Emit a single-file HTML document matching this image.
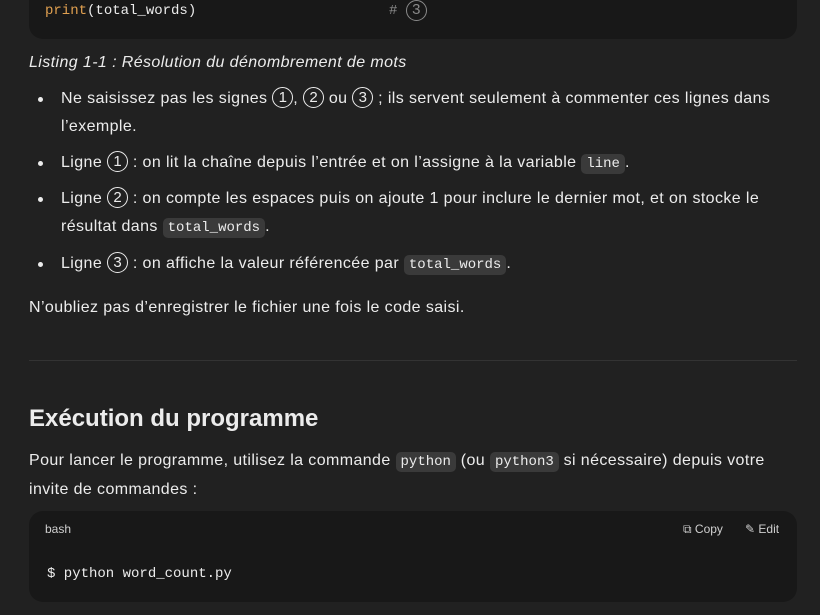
<!DOCTYPE html>
<html><head><meta charset="utf-8"><style>
*{margin:0;padding:0;box-sizing:border-box}
body{width:820px;height:615px;overflow:hidden;background:#212121;color:#ececec;font-family:"Liberation Sans","DejaVu Sans",sans-serif;font-size:16px;position:relative;letter-spacing:0.4px}
.abs{position:absolute}
.code{background:#181818;border-radius:14px;left:29px;width:768px}
.mono{font-family:"Liberation Mono","DejaVu Sans Mono",monospace;letter-spacing:0}
.ic{background:#3a3a3a;border-radius:5px;padding:2px 5px;font-family:"Liberation Mono",monospace;font-size:14px;letter-spacing:0}
.c{display:inline-block;width:21px;height:21px;border:1.5px solid currentColor;border-radius:50%;font-size:15px;text-align:center;line-height:19px;vertical-align:middle;position:relative;top:-1px;letter-spacing:0}
.line{left:61px;white-space:nowrap;line-height:28px}
.dot{left:38px;width:5px;height:5px;border-radius:50%;background:#ececec}
</style></head><body>
<div class="abs code" style="top:-20px;height:59px"></div>
<div class="abs mono" style="left:45px;top:2px;font-size:14px;line-height:18px"><span style="color:#e0a050">print</span>(total_words)</div>
<div class="abs mono" style="left:389px;top:0px;font-size:14px;color:#8a8a8a;line-height:20px"># <span class="c" style="top:0px">3</span></div>
<div class="abs" style="left:29px;top:52px;font-style:italic;line-height:22px">Listing 1-1 : Résolution du dénombrement de mots</div>
<div class="abs dot" style="top:97px"></div>
<div class="abs line" style="top:85px">Ne saisissez pas les signes <span class="c">1</span>, <span class="c">2</span> ou <span class="c">3</span> ; ils servent seulement à commenter ces lignes dans</div>
<div class="abs line" style="top:113px">l’exemple.</div>
<div class="abs dot" style="top:161px"></div>
<div class="abs line" style="top:149px">Ligne <span class="c">1</span> : on lit la chaîne depuis l’entrée et on l’assigne à la variable <span class="ic">line</span>.</div>
<div class="abs dot" style="top:197px"></div>
<div class="abs line" style="top:185px">Ligne <span class="c">2</span> : on compte les espaces puis on ajoute 1 pour inclure le dernier mot, et on stocke le</div>
<div class="abs line" style="top:213px">résultat dans <span class="ic">total_words</span>.</div>
<div class="abs dot" style="top:262px"></div>
<div class="abs line" style="top:250px">Ligne <span class="c">3</span> : on affiche la valeur référencée par <span class="ic">total_words</span>.</div>
<div class="abs" style="left:29px;top:297px;line-height:22px">N’oubliez pas d’enregistrer le fichier une fois le code saisi.</div>
<div class="abs" style="left:29px;top:360px;width:768px;height:1px;background:#333"></div>
<div class="abs" style="left:29px;top:404px;font-size:24px;font-weight:bold;line-height:30px;letter-spacing:0">Exécution du programme</div>
<div class="abs" style="left:29px;top:447px;line-height:28px;white-space:nowrap">Pour lancer le programme, utilisez la commande <span class="ic">python</span> (ou <span class="ic">python3</span> si nécessaire) depuis votre</div>
<div class="abs" style="left:29px;top:476px;line-height:28px">invite de commandes :</div>
<div class="abs code" style="top:511px;height:91px"></div>
<div class="abs" style="left:45px;top:521px;font-size:12px;color:#cfcfcf;line-height:16px;letter-spacing:0">bash</div>
<div class="abs" style="left:683px;top:521px;font-size:12px;color:#cfcfcf;line-height:16px;letter-spacing:0">⧉ Copy</div>
<div class="abs" style="left:745px;top:521px;font-size:12px;color:#cfcfcf;line-height:16px;letter-spacing:0">✎ Edit</div>
<div class="abs mono" style="left:47px;top:565px;font-size:14px;line-height:18px">$ python word_count.py</div>
</body></html>
